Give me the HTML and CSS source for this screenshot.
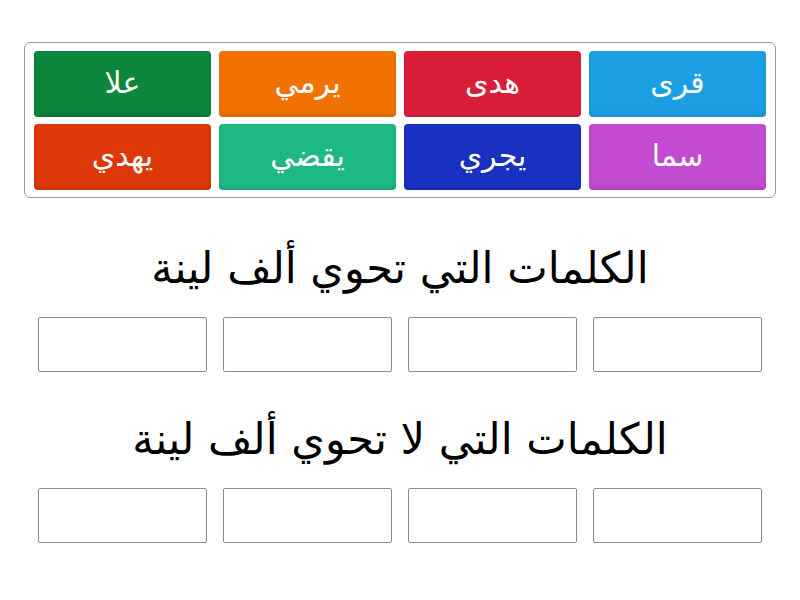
FILE: index.html
```html
<!DOCTYPE html>
<html lang="ar">
<head>
<meta charset="utf-8">
<link rel="stylesheet" href="styles.css">
</head>
<body>
<div class="page">
  <div class="board">
    <div class="tile blue">قرى</div>
    <div class="tile red">هدى</div>
    <div class="tile orange">يرمي</div>
    <div class="tile green">علا</div>
    <div class="tile purple">سما</div>
    <div class="tile navy">يجري</div>
    <div class="tile teal">يقضي</div>
    <div class="tile vermilion">يهدي</div>
  </div>
  <div class="group first">
    <h2 class="title">الكلمات التي تحوي ألف لينة</h2>
    <div class="slots">
      <div class="slot"></div><div class="slot"></div><div class="slot"></div><div class="slot"></div>
    </div>
  </div>
  <div class="group">
    <h2 class="title">الكلمات التي لا تحوي ألف لينة</h2>
    <div class="slots">
      <div class="slot"></div><div class="slot"></div><div class="slot"></div><div class="slot"></div>
    </div>
  </div>
</div>
</body>
</html>
```
FILE: styles.css
```css
html, body {
  margin: 0;
  padding: 0;
  background: #ffffff;
}
.page {
  width: 800px;
  padding-top: 42px;
  direction: rtl;
  font-family: "DejaVu Sans", sans-serif;
}
.board {
  margin: 0 24px;
  border: 1px solid #9a9a9a;
  border-radius: 6px;
  padding: 8px 9px 7px;
  display: grid;
  grid-template-columns: repeat(4, 177px);
  grid-auto-rows: 66px;
  gap: 7px 8px;
}
.tile {
  border-radius: 4px;
  color: #ffffff;
  font-family: "DejaVu Sans", sans-serif;
  font-size: 30px;
  padding-bottom: 3px;
  display: flex;
  align-items: center;
  justify-content: center;
  box-shadow: inset 0 -3px 4px rgba(0,0,0,0.10);
}
.blue { background: #1c9fe2; }
.red { background: #da1e3a; }
.orange { background: #f27200; }
.green { background: #0b863a; }
.purple { background: #c24bd2; }
.navy { background: #1a30c0; }
.teal { background: #1db884; }
.vermilion { background: #dc380a; }
.group {
  margin-top: 37px;
}
.group.first {
  margin-top: 40px;
}
.title {
  margin: 0;
  font-weight: normal;
  font-size: 43px;
  line-height: 60px;
  text-align: center;
  color: #000000;
}
.slots {
  margin: 19px 38px 0;
  display: grid;
  grid-template-columns: repeat(4, 169px);
  gap: 16px;
}
.slot {
  height: 53px;
  border: 1px solid #8c8c8c;
  border-radius: 2px;
}
```
